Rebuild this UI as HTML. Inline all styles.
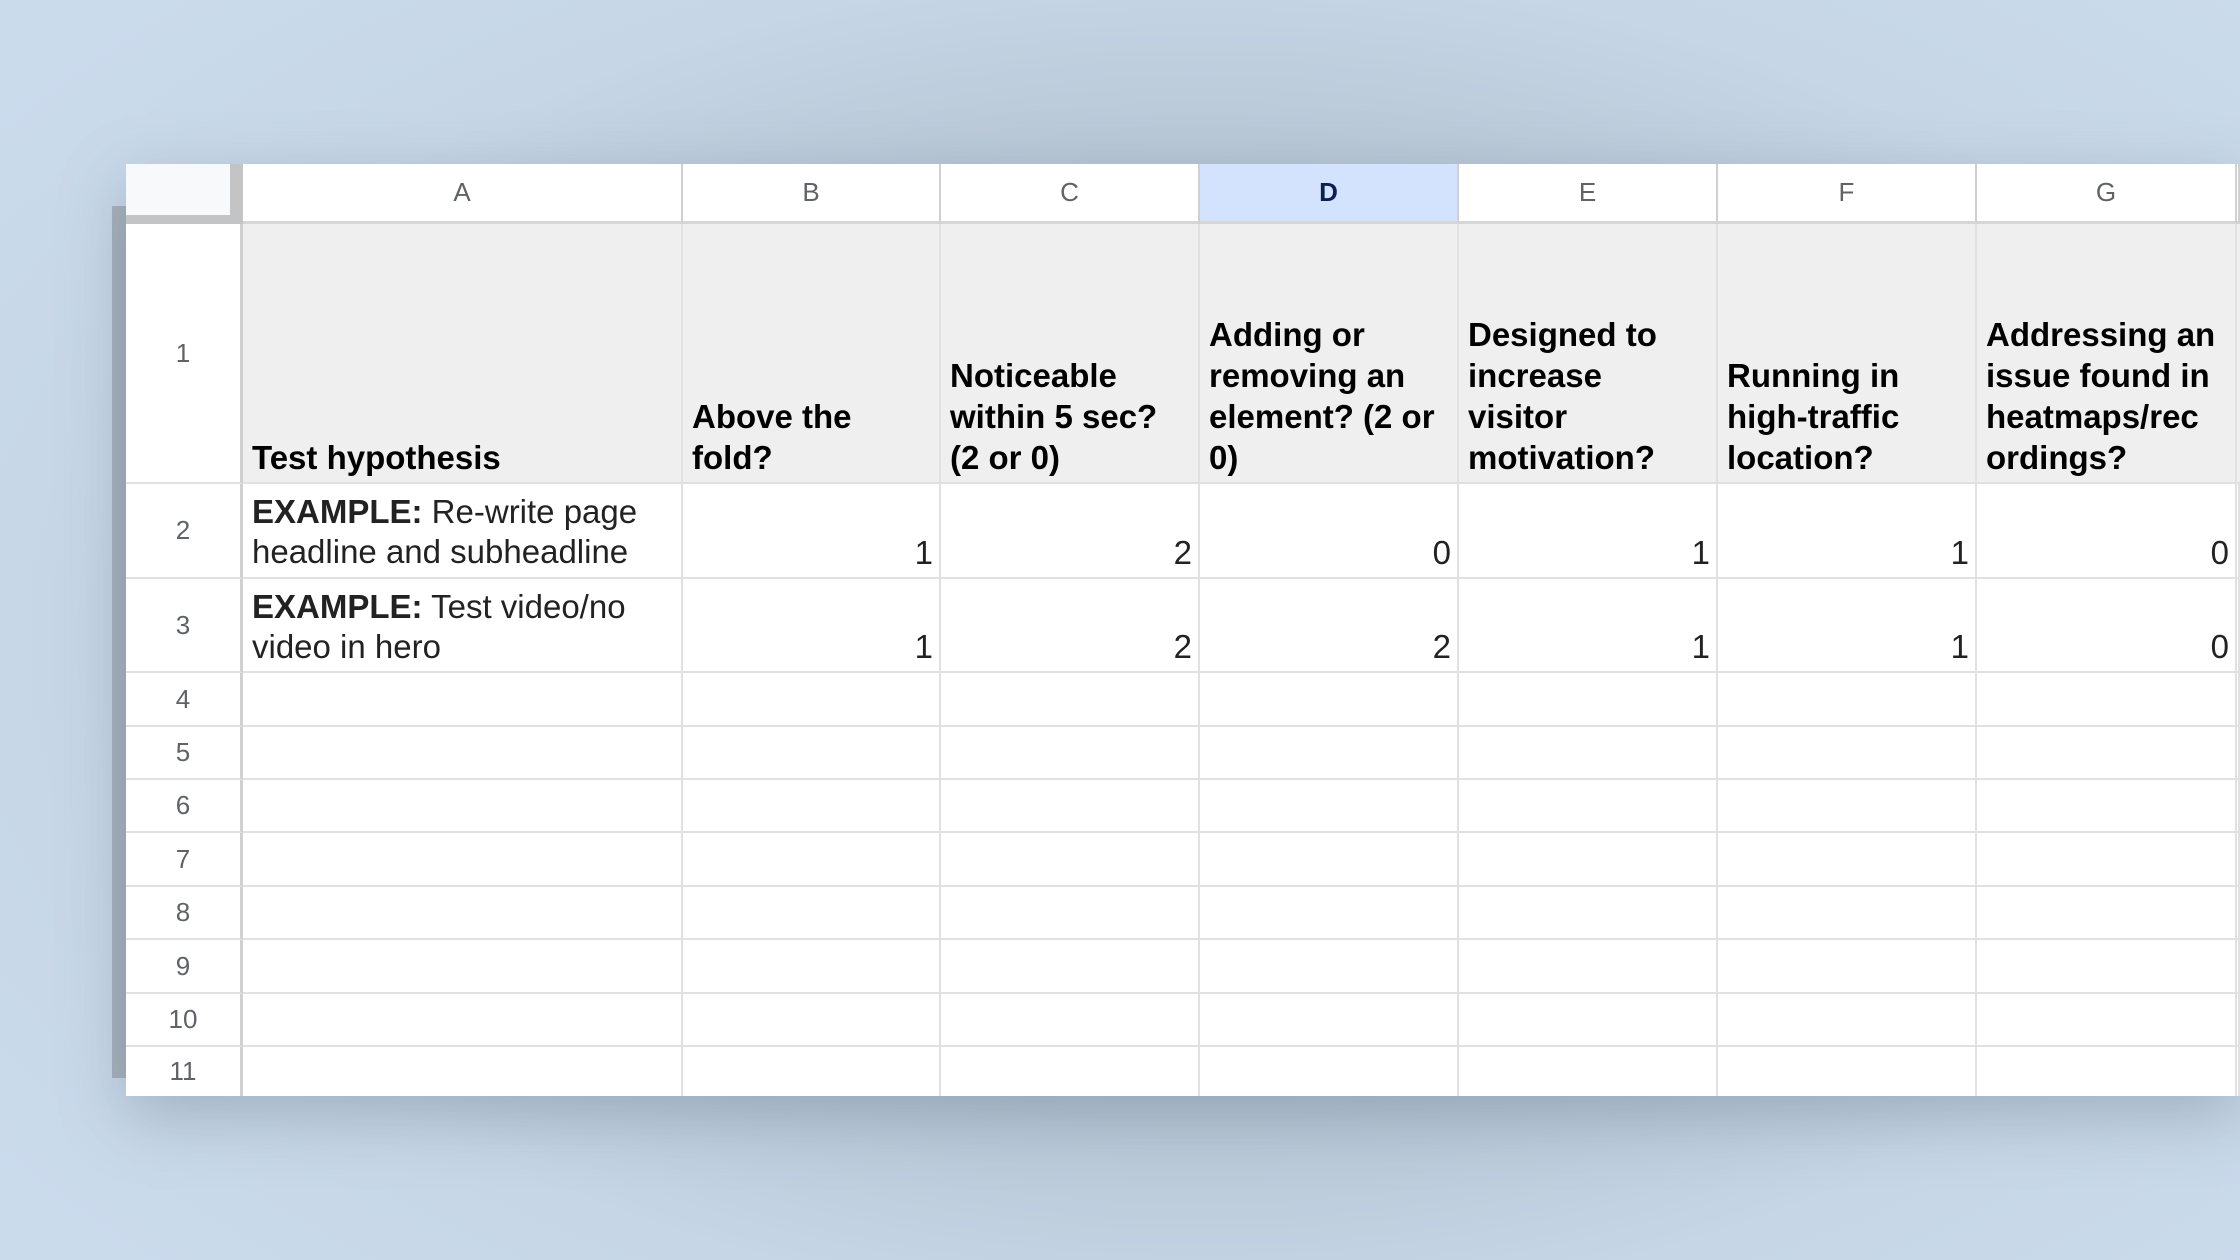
<!DOCTYPE html>
<html><head><meta charset="utf-8">
<style>
html,body{margin:0;padding:0;}
body{width:2240px;height:1260px;overflow:hidden;position:relative;
 background:radial-gradient(ellipse 1500px 900px at 1200px 640px,#a9b6c3 0%,#b3c1cf 45%,#c6d6e6 75%,#cadbec 100%);
 font-family:"Liberation Sans",Arial,sans-serif;}
.strip{position:absolute;left:112px;top:206px;width:16px;height:872px;background:#a6b1bc;}
.sheet{position:absolute;left:126px;top:164px;width:2114px;height:932px;background:#fff;
 box-shadow:0 20px 60px rgba(90,105,125,.35);
 display:grid;
 grid-template-columns:117px 440px 258px 259px 259px 259px 259px 260px 3px;
 grid-template-rows:60px 260px 95px 94px 54px 53px 53px 54px 53px 54px 53px 49px;
 overflow:hidden;}
.c{box-sizing:border-box;border-right:2px solid #e1e1e1;border-bottom:2px solid #e1e1e1;overflow:hidden;}
.ch{display:flex;align-items:center;justify-content:center;font-size:26px;color:#5f6368;border-bottom:3px solid #d6d6d6;border-right:2px solid #d0d0d0;}
.ch.sel{background:#d3e3fd;color:#0b2150;font-weight:bold;}
.corner{background:#f8f9fa;border-right:13px solid #c4c4c4;border-bottom:9px solid #c4c4c4;}
.rh{display:flex;align-items:center;justify-content:center;font-size:26px;color:#5f6368;border-right:3px solid #d0d0d0;}
.h{background:#efefef;font-weight:bold;font-size:33px;line-height:41px;color:#000;display:flex;align-items:flex-end;padding:0 4px 4px 9px;white-space:nowrap;}
.t{font-size:33px;line-height:40px;color:#222;padding:8px 6px 0 9px;white-space:nowrap;}
.n{font-size:33px;color:#222;display:flex;align-items:flex-end;justify-content:flex-end;padding:0 6px 5px 0;}
</style></head><body>
<div class="strip"></div>
<div class="sheet">
 <div class="c corner"></div>
 <div class="c ch">A</div><div class="c ch">B</div><div class="c ch">C</div><div class="c ch sel">D</div><div class="c ch">E</div><div class="c ch">F</div><div class="c ch">G</div><div class="c ch"></div>

 <div class="c rh">1</div>
 <div class="c h"><div>Test hypothesis</div></div>
 <div class="c h"><div>Above the<br>fold?</div></div>
 <div class="c h"><div>Noticeable<br>within 5 sec?<br>(2 or 0)</div></div>
 <div class="c h"><div>Adding or<br>removing an<br>element? (2 or<br>0)</div></div>
 <div class="c h"><div>Designed to<br>increase<br>visitor<br>motivation?</div></div>
 <div class="c h"><div>Running in<br>high-traffic<br>location?</div></div>
 <div class="c h"><div>Addressing an<br>issue found in<br>heatmaps/rec<br>ordings?</div></div>
 <div class="c h"></div>

 <div class="c rh">2</div>
 <div class="c t"><b>EXAMPLE:</b> Re-write page<br>headline and subheadline</div>
 <div class="c n">1</div><div class="c n">2</div><div class="c n">0</div><div class="c n">1</div><div class="c n">1</div><div class="c n">0</div><div class="c"></div>

 <div class="c rh">3</div>
 <div class="c t"><b>EXAMPLE:</b> Test video/no<br>video in hero</div>
 <div class="c n">1</div><div class="c n">2</div><div class="c n">2</div><div class="c n">1</div><div class="c n">1</div><div class="c n">0</div><div class="c"></div>

 <div class="c rh">4</div><div class="c"></div><div class="c"></div><div class="c"></div><div class="c"></div><div class="c"></div><div class="c"></div><div class="c"></div><div class="c"></div>
 <div class="c rh">5</div><div class="c"></div><div class="c"></div><div class="c"></div><div class="c"></div><div class="c"></div><div class="c"></div><div class="c"></div><div class="c"></div>
 <div class="c rh">6</div><div class="c"></div><div class="c"></div><div class="c"></div><div class="c"></div><div class="c"></div><div class="c"></div><div class="c"></div><div class="c"></div>
 <div class="c rh">7</div><div class="c"></div><div class="c"></div><div class="c"></div><div class="c"></div><div class="c"></div><div class="c"></div><div class="c"></div><div class="c"></div>
 <div class="c rh">8</div><div class="c"></div><div class="c"></div><div class="c"></div><div class="c"></div><div class="c"></div><div class="c"></div><div class="c"></div><div class="c"></div>
 <div class="c rh">9</div><div class="c"></div><div class="c"></div><div class="c"></div><div class="c"></div><div class="c"></div><div class="c"></div><div class="c"></div><div class="c"></div>
 <div class="c rh">10</div><div class="c"></div><div class="c"></div><div class="c"></div><div class="c"></div><div class="c"></div><div class="c"></div><div class="c"></div><div class="c"></div>
 <div class="c rh" style="border-bottom:none">11</div><div class="c" style="border-bottom:none"></div><div class="c" style="border-bottom:none"></div><div class="c" style="border-bottom:none"></div><div class="c" style="border-bottom:none"></div><div class="c" style="border-bottom:none"></div><div class="c" style="border-bottom:none"></div><div class="c" style="border-bottom:none"></div><div class="c" style="border-bottom:none"></div>
</div>
</body></html>
